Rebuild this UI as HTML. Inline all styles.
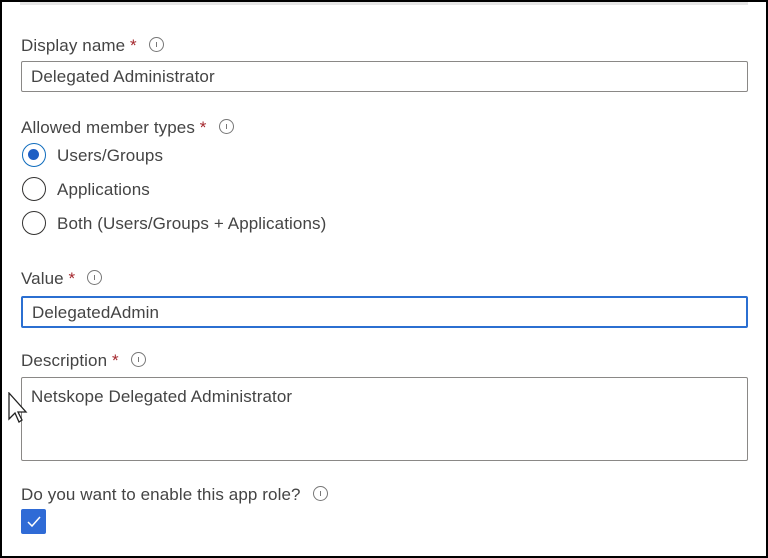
<!DOCTYPE html>
<html><head><style>
html,body{margin:0;padding:0}
body{width:768px;height:558px;position:relative;background:#fff;font-family:"Liberation Sans",sans-serif;color:#323130;overflow:hidden}
.frame{position:absolute;left:0;top:0;width:764px;height:554px;border:2px solid #000;}
.abs{position:absolute}
.lbl{font-size:17px;color:#444;white-space:nowrap;letter-spacing:0.1px}
.star{color:#a4262c}
.info{display:inline-block;width:13px;height:13px;border:1.2px solid #777;border-radius:50%;vertical-align:middle;margin-left:12px;position:relative;top:-2px}
.info:after{content:"";position:absolute;left:6px;top:4px;width:1.2px;height:5px;background:#777}
.inp{border:1.5px solid #8a8886;border-radius:2px;box-sizing:border-box;font-size:17px;color:#444;padding-left:9px;letter-spacing:0.1px}
.radio{position:absolute;left:22px;width:24px;height:24px;box-sizing:border-box;border:1.5px solid #323130;border-radius:50%}
</style></head><body>
<div class="frame"></div>
<div class="abs" style="left:20px;top:2px;width:728px;height:3px;background:#e6e6e6"></div>

<div class="abs lbl" style="left:21px;top:36px">Display name <span class="star">*</span><span class="info"></span></div>
<div class="abs inp" style="left:21px;top:61px;width:727px;height:31px;line-height:29px">Delegated Administrator</div>

<div class="abs lbl" style="left:21px;top:118px">Allowed member types <span class="star">*</span><span class="info"></span></div>
<div class="radio" style="top:143px;border-color:#0f6cbd;border-width:1.5px"><div style="position:absolute;left:5px;top:5px;width:11px;height:11px;border-radius:50%;background:#1f5fc4"></div></div>
<div class="abs lbl" style="left:57px;top:146px">Users/Groups</div>
<div class="radio" style="top:177px"></div>
<div class="abs lbl" style="left:57px;top:180px">Applications</div>
<div class="radio" style="top:211px"></div>
<div class="abs lbl" style="left:57px;top:214px">Both (Users/Groups + Applications)</div>

<div class="abs lbl" style="left:21px;top:269px">Value <span class="star">*</span><span class="info"></span></div>
<div class="abs inp" style="left:21px;top:296px;width:727px;height:32px;line-height:29px;border:2px solid #2b6fd1">DelegatedAdmin</div>

<div class="abs lbl" style="left:21px;top:351px">Description <span class="star">*</span><span class="info"></span></div>
<div class="abs inp" style="left:21px;top:377px;width:727px;height:84px;padding-top:9px;line-height:19px">Netskope Delegated Administrator</div>

<svg class="abs" style="left:7px;top:392px" width="22" height="32" viewBox="0 0 22 32"><path d="M2 1 L2 27 L8 21 L12 30 L15 28 L11 20 L19 20 Z" fill="#fff" stroke="#222" stroke-width="1.3"/></svg>

<div class="abs lbl" style="left:21px;top:485px">Do you want to enable this app role?<span class="info"></span></div>
<div class="abs" style="left:21px;top:509px;width:25px;height:25px;background:#2f6bd6;border-radius:2px">
<svg width="25" height="25" viewBox="0 0 25 25"><path d="M7 13 L11 17 L19 8" fill="none" stroke="#fff" stroke-width="1.5"/></svg></div>
</body></html>
